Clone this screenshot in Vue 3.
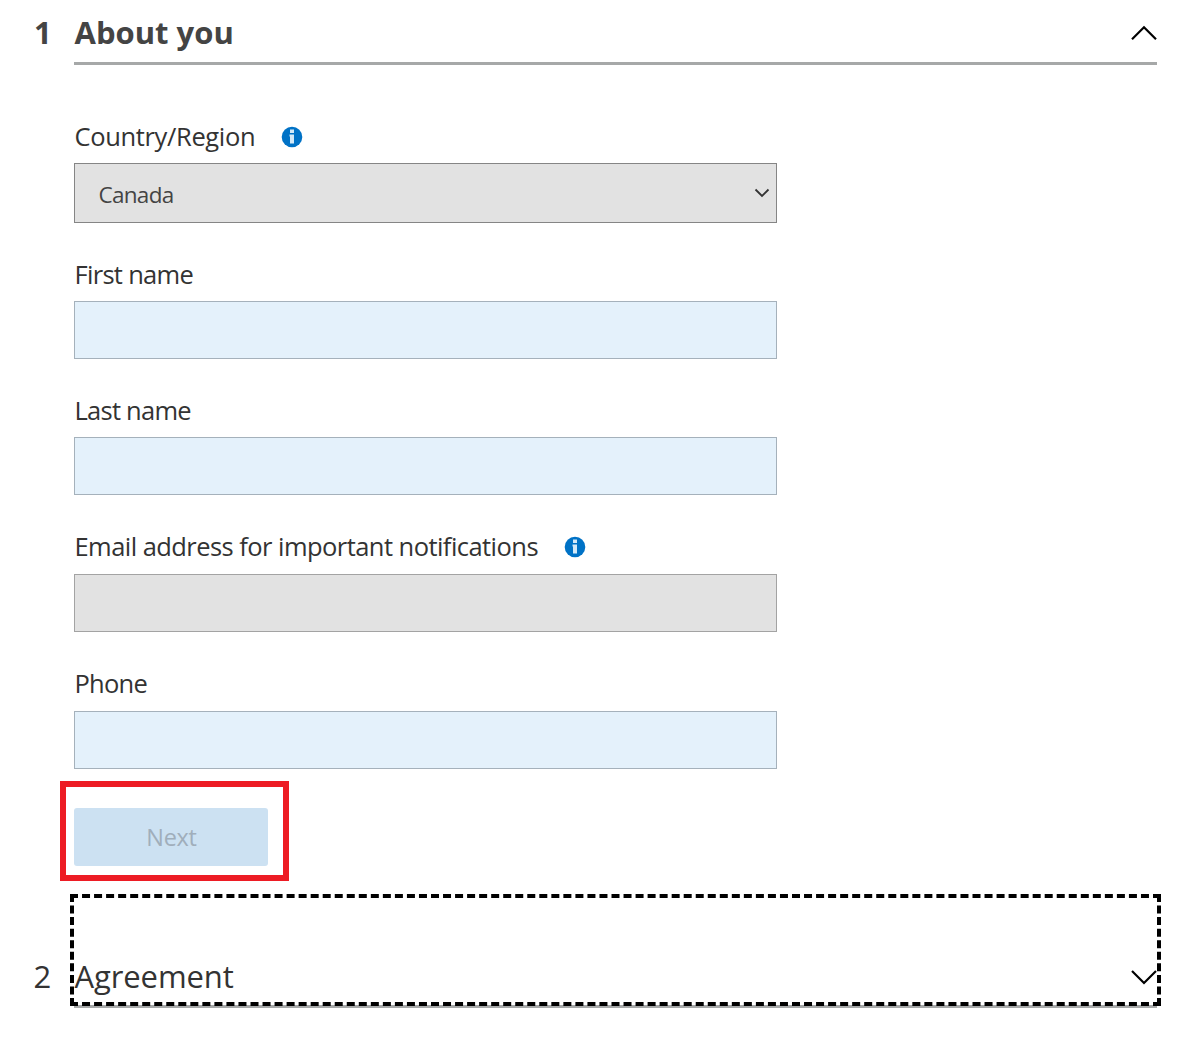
<script setup>
const fields = [
  { id: 'first', label: 'First name' },
  { id: 'last', label: 'Last name' },
  { id: 'email', label: 'Email address for important notifications', info: true, disabled: true },
  { id: 'phone', label: 'Phone' },
]
</script>

<template>
  <main class="page">
    <header class="section open">
      <span class="num">1</span>
      <div class="bar">
        <h2 class="title-1">About you</h2>
        <svg class="chev" width="28" height="18" viewBox="0 0 28 18"><path d="M2 15.300 14 3.300 26 15.300" /></svg>
      </div>
    </header>

    <form class="form">
      <div class="field country">
        <div class="label">
          <span class="t-country">Country/Region</span>
          <svg class="info" width="22" height="22" viewBox="0 0 22 22"><circle cx="11" cy="11" r="10.300" /><path d="M9 3.500h4v3.500H9zM8.500 8.500h4.500v9H9v-7h-.5z" /></svg>
        </div>
        <div class="select">
          <span class="t-canada">Canada</span>
          <svg width="16" height="10" viewBox="0 0 16 10"><path d="M1.500 1.500 8 8 14.500 1.500" /></svg>
        </div>
      </div>
      <div v-for="f in fields" :key="f.id" class="field" :class="f.id">
        <div class="label">
          <span :class="'t-' + f.id">{{ f.label }}</span>
          <svg v-if="f.info" class="info" width="22" height="22" viewBox="0 0 22 22"><circle cx="11" cy="11" r="10.300" /><path d="M9 3.500h4v3.500H9zM8.500 8.500h4.500v9H9v-7h-.5z" /></svg>
        </div>
        <div class="input" :class="{ disabled: f.disabled }"></div>
      </div>
      <div class="callout"><button type="button" disabled><span>Next</span></button></div>
    </form>

    <footer class="section closed">
      <span class="num">2</span>
      <div class="bar">
        <h2 class="title-2">Agreement</h2>
        <svg class="chev" width="28" height="18" viewBox="0 0 28 18"><path d="M2 3 14 15 26 3" /></svg>
        <div class="focus"></div>
      </div>
    </footer>
  </main>
</template>

<style>
body { margin: 0; background: #fff; }
</style>

<style scoped>
.page { box-sizing: border-box; width: 1193px; height: 1041px; overflow: hidden; background: #fff; color: #333; font-family: "Open Sans", "Noto Sans", sans-serif; display: flex; flex-direction: column; }
.section { display: flex; width: 1156.500px; box-sizing: border-box; padding-left: 34px; }
.num { width: 40px; font-size: 31px; line-height: 38px; }
.bar { position: relative; flex: 1; display: flex; justify-content: space-between; box-sizing: border-box; border-bottom: 3px solid #a6a8a8; }
h2 { margin: 0; padding-left: 0.500px; font-size: 31px; line-height: 38px; font-weight: 400; white-space: nowrap; }
.open { height: 65px; padding-top: 13px; color: #444; }
.open .num, .open h2 { font-weight: 700; }
.title-2 { letter-spacing: -0.100px; }
.closed .num { text-indent: -0.500px; }
.chev { margin: 11px -1.400px 0 0; fill: none; stroke: #000; stroke-width: 2.2; }
.form { display: flex; flex-direction: column; padding: 53px 0 0 74px; }
.field { display: flex; flex-direction: column; width: 703px; height: 136.400px; }
.field.country { height: 138px; }
.label { display: flex; align-items: center; height: 37px; margin-bottom: 8px; font-size: 25.500px; white-space: nowrap; }
.label span { position: relative; top: -1px; padding-left: 0.500px; }
.t-country { width: 206px; letter-spacing: -0.350px; }
.t-email { width: 489px; letter-spacing: -0.550px; }
.t-first { letter-spacing: -0.700px; }
.t-last, .t-phone { letter-spacing: -0.750px; }
.t-canada { letter-spacing: -0.700px; }
.info { fill: #0072c6; }
.info path { fill: #d3e9f8; }
.select { display: flex; align-items: center; justify-content: space-between; box-sizing: border-box; height: 60px; padding: 2px 6px 0 23.500px; border: 1px solid #858585; background: #e2e2e2; font-size: 22.500px; color: #444; }
.select svg { fill: none; stroke: #333; stroke-width: 1.800; margin-top: -2px; }
.input { box-sizing: border-box; height: 58px; border: 1px solid #a5b1bb; background: #e4f1fb; }
.input.disabled { border-color: #a3a3a3; background: #e2e2e2; }
.phone .label { margin-bottom: 8.400px; }
.callout { box-sizing: border-box; width: 229px; height: 100px; margin: -20.600px 0 0 -14px; padding: 21px 0 0 8px; border: 6px solid #ed1c24; }
button { display: block; width: 194px; height: 58px; padding: 0 0 0 1px; border: 0; border-radius: 3px; background: #cce1f2; color: #a0aebb; font: 23.500px "Open Sans", sans-serif; letter-spacing: -0.300px; }
.closed { height: 112px; margin-top: 15px; padding-top: 61px; }
.focus { position: absolute; left: -4.500px; top: -63px; width: 1091px; height: 112px; box-sizing: border-box; border: 4px dashed #000; }
</style>
